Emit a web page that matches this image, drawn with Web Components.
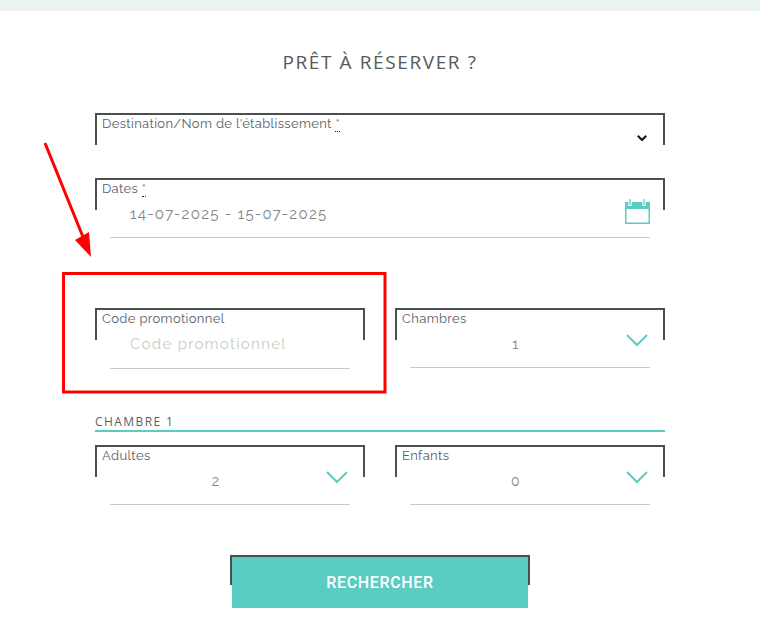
<!DOCTYPE html>
<html lang="fr">
<head>
<meta charset="utf-8">
<title>Prêt à réserver</title>
<style>
  html, body { margin: 0; background: #fff; }
  body { position: relative; height: 636px; overflow: hidden; font-family: "Lato", sans-serif; }
</style>
</head>
<body>
<booking-page>
  <booking-field label="Destination/Nom de l'établissement" required kind="native"></booking-field>
  <booking-field label="Dates" required kind="date" value="14-07-2025 - 15-07-2025"></booking-field>
  <div slot="row">
    <booking-field label="Code promotionnel" kind="text" placeholder="Code promotionnel"></booking-field>
    <booking-field label="Chambres" kind="select" value="1"></booking-field>
  </div>
  <section-title slot="section">CHAMBRE 1</section-title>
  <div slot="room">
    <booking-field label="Adultes" kind="select" value="2"></booking-field>
    <booking-field label="Enfants" kind="select" value="0"></booking-field>
  </div>
  <search-button slot="action">RECHERCHER</search-button>
</booking-page>
<promo-callout></promo-callout>

<script>
// booking-field.js
class BookingField extends HTMLElement {
  connectedCallback() {
    const shadowRoot = this.attachShadow({mode: 'open'});
    const kind = this.getAttribute('kind');
    const value = this.getAttribute('value') || this.getAttribute('placeholder') || '';
    const star = this.hasAttribute('required') ? ' <abbr>*</abbr>' : '';
    let icon = '';
    if (kind === 'select') {
      icon = `<svg class="chev" width="22" height="13" viewBox="0 0 22 13"><path d="M1 1l10 10L21 1" fill="none" stroke="#5accc2" stroke-width="2"/></svg>`;
    } else if (kind === 'date') {
      icon = `<svg class="cal" width="25" height="25" viewBox="0 0 25 25">
        <rect x="0" y="3" width="25" height="22" fill="#5accc2"/>
        <rect x="1.5" y="10" width="22" height="13.5" fill="#fff"/>
        <path d="M5 0v7M19 0v7" stroke="#fff" stroke-width="3.4"/>
        <path d="M5 0v6M19 0v6" stroke="#7adcd3" stroke-width="1.6"/>
      </svg>`;
    } else if (kind === 'native') {
      icon = `<svg class="small" width="10" height="6" viewBox="0 0 10 6"><path d="M.8 .8L5 5 9.2 .8" fill="none" stroke="#111" stroke-width="2"/></svg>`;
    }
    shadowRoot.innerHTML = `
      <style>
        :host {
          display: grid;
          height: 60px;
          grid-template-columns: 1fr;
          grid-template-rows: 1fr;
          min-width: 0;
          color: #5d6166;
          font-family: "Raleway", "Lato", sans-serif;
        }
        .bracket, .body { grid-area: 1 / 1; }
        .bracket {
          height: 29px;
          border: 2px solid #4a4f4f;
          border-bottom: 0;
          padding: 1px 0 0 5px;
          font-size: 13px;
          line-height: 15px;
          letter-spacing: .35px;
          color: #5b6068;
        }
        abbr { border-bottom: 1px dotted #222; text-decoration: none; }
        .body {
          margin: 0 15px;
          height: 60px;
          display: flex;
          align-items: flex-start;
          justify-content: space-between;
          box-sizing: border-box;
        }
        :host([kind="date"]) .body,
        :host([kind="text"]) .body,
        :host([kind="select"]) .body { border-bottom: 1px solid #c8c8c8; }
        :host([kind="text"]) .body { height: 61px; }
        .value {
          flex: 1;
          margin-top: 27px;
          padding-left: 20px;
          font-size: 15px;
          line-height: 18px;
          letter-spacing: 1.3px;
          color: #80857f;
          white-space: nowrap;
        }
        :host([kind="text"]) .value { color: #c9ccc6; }
        :host([kind="select"]) .value {
          padding: 0 28px 0 0;
          text-align: center;
          font-size: 14px;
          margin-top: 27px;
        }
        .chev { top: 26px; flex: none; position: absolute; right: 17px; }
        :host([kind="select"]) { position: relative; }
        .cal { flex: none; margin-top: 21px; }
        .small { flex: none; margin: 22px 3px 0 0; margin-left: auto; }
      </style>
      <div class="bracket">${this.getAttribute('label')}${star}</div>
      <div class="body">
        ${kind === 'native' ? '' : `<div class="value">${value}</div>`}
        ${icon}
      </div>
    `;
  }
}
customElements.define('booking-field', BookingField);

class SectionTitle extends HTMLElement {
  constructor() {
    super();
    const shadowRoot = this.attachShadow({mode: 'open'});
    shadowRoot.innerHTML = `
      <style>
        :host {
          display: block;
          height: 16px;
          border-bottom: 2px solid #5accc2;
          font-family: "Open Sans", sans-serif;
          font-size: 12px;
          line-height: 16px;
          letter-spacing: 1.42px;
          color: #5a5f63;
        }
      </style>
      <slot></slot>
    `;
  }
}
customElements.define('section-title', SectionTitle);

class SearchButton extends HTMLElement {
  constructor() {
    super();
    const shadowRoot = this.attachShadow({mode: 'open'});
    shadowRoot.innerHTML = `
      <style>
        :host { display: grid; width: 300px; height: 53px; margin: 0 auto; }
        .bracket, button { grid-area: 1 / 1; }
        .bracket { height: 28px; border: 2px solid #4a4f4f; border-bottom: 0; }
        button {
          margin: 2px 2px 0;
          border: 0;
          padding: 0;
          background: #5accc2;
          color: #fff;
          font-family: "Roboto", sans-serif;
          font-size: 16px;
          font-weight: 500;
          letter-spacing: .65px;
        }
      </style>
      <div class="bracket"></div>
      <button><slot></slot></button>
    `;
  }
}
customElements.define('search-button', SearchButton);

class BookingPage extends HTMLElement {
  constructor() {
    super();
    const shadowRoot = this.attachShadow({mode: 'open'});
    shadowRoot.innerHTML = `
      <style>
        :host { display: block; }
        .topbar { height: 11px; background: #ebf4f3; }
        h1 {
          margin: 38px 0 0;
          height: 27px;
          text-align: center;
          font-family: "Open Sans", sans-serif;
          font-size: 19px;
          font-weight: 400;
          line-height: 27px;
          letter-spacing: 1.6px;
          color: #55595c;
        }
        form { width: 570px; margin: 37px auto 0; display: flex; flex-direction: column; }
        .stack { display: flex; flex-direction: column; gap: 5px; }
        ::slotted(div) { display: grid; grid-template-columns: 270px 270px; gap: 30px; }
        .row { margin-top: 70px; }
        .section { margin-top: 46px; }
        .room { margin-top: 13px; }
        .action { margin-top: 50px; }
      </style>
      <div class="topbar"></div>
      <h1>PRÊT À RÉSERVER ?</h1>
      <form>
        <div class="stack"><slot></slot></div>
        <div class="row"><slot name="row"></slot></div>
        <div class="section"><slot name="section"></slot></div>
        <div class="room"><slot name="room"></slot></div>
        <div class="action"><slot name="action"></slot></div>
      </form>
    `;
  }
}
customElements.define('booking-page', BookingPage);

// red annotation drawn over the screenshot
class PromoCallout extends HTMLElement {
  constructor() {
    super();
    const shadowRoot = this.attachShadow({mode: 'open'});
    shadowRoot.innerHTML = `
      <style>
        :host { position: absolute; inset: 0; display: block; pointer-events: none; }
        svg { display: block; }
      </style>
      <svg width="760" height="636" viewBox="0 0 760 636">
        <rect x="63.5" y="273.5" width="321.5" height="118.5" fill="none" stroke="#f00" stroke-width="3"/>
        <path d="M45 143L83 237" stroke="#f00" stroke-width="3" fill="none"/>
        <path d="M75 240L89 232L91 257Z" fill="#f00"/>
      </svg>
    `;
  }
}
customElements.define('promo-callout', PromoCallout);
</script>
</body>
</html>
